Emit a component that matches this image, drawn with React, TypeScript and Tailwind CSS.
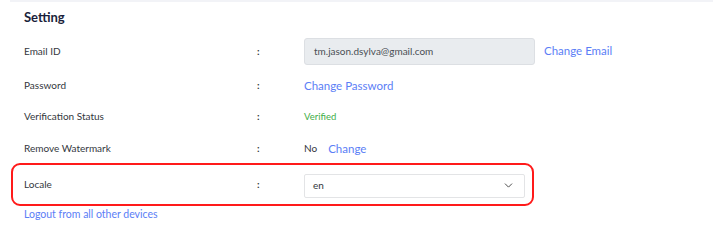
import { ChevronDown } from "lucide-react";

const font = { fontFamily: "Lato, 'Open Sans', sans-serif" };

function Row({
  label,
  h,
  children,
}: {
  label: string;
  h: string;
  children: React.ReactNode;
}) {
  return (
    <div className={`flex items-center ${h}`}>
      <div className="w-[233px] text-[10px] text-[#33373d]">{label}</div>
      <div className="w-[47px] text-[10px] font-bold text-[#33373d]">:</div>
      <div className="flex items-center">{children}</div>
    </div>
  );
}

export default function App() {
  return (
    <div className="w-[720px] h-[240px] bg-white overflow-hidden" style={font}>
      <div className="mx-[10px] w-[703px] border-t-2 border-[#f2f3f7]" />

      <div className="pl-[24px]">
        <h2 className="h-[32px] flex items-center pb-[1px] text-[13px] font-bold text-[#1b1f3b]">
          Setting
        </h2>

        <Row label="Email ID" h="h-[34px]">
          <div className="w-[231px] h-[27px] flex items-center px-[9px] bg-[#e9ecef] border border-[#dcdfe3] rounded-[3px] text-[10px] text-[#4a4f55]">
            tm.jason.dsylva@gmail.com
          </div>
          <a className="ml-[9px] text-[11.5px] text-[#5b7ef6]">Change Email</a>
        </Row>

        <Row label="Password" h="h-[34px]">
          <a className="pt-[2px] text-[11.5px] text-[#5b7ef6]">Change Password</a>
        </Row>

        <Row label="Verification Status" h="h-[28px]">
          <span className="pt-[3px] text-[9.5px] text-[#3fae49]">Verified</span>
        </Row>

        <Row label="Remove Watermark" h="h-[33px] pt-[4px]">
          <span className="text-[10px] text-[#33373d]">No</span>
          <a className="ml-[11px] text-[11.5px] text-[#5b7ef6]">Change</a>
        </Row>
      </div>

      <div className="ml-[11px] w-[523px] h-[43px] border-2 border-[#ff1a1a] rounded-[9px] pl-[11px] flex items-center">
        <div className="w-[233px] text-[10px] text-[#33373d]">Locale</div>
        <div className="w-[47px] text-[10px] font-bold text-[#33373d]">:</div>
        <div className="w-[221px] h-[24px] mt-[2px] flex items-center justify-between px-[8px] bg-white border border-[#e3e4e6] rounded-[2px] text-[10px] text-[#33373d]">
          <span>en</span>
          <ChevronDown size={13} strokeWidth={1.75} className="text-[#444] mr-[1px]" />
        </div>
      </div>

      <div className="pl-[24px] pt-[1px] text-[10.5px] leading-[14px]">
        <a className="text-[#5b7ef6]">Logout from all other devices</a>
      </div>
    </div>
  );
}
